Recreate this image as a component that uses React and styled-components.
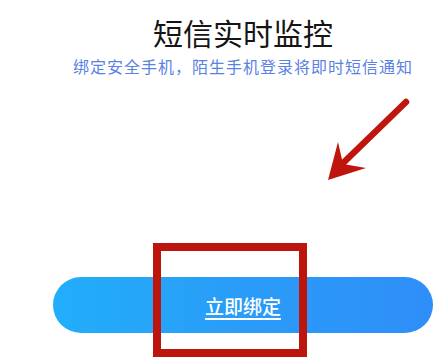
import styled, { createGlobalStyle } from 'styled-components';

const GlobalStyle = createGlobalStyle`
  html, body {
    margin: 0;
    padding: 0;
    background: #ffffff;
  }
  body {
    font-family: "Noto Sans CJK SC", "Noto Sans", sans-serif;
  }
`;

const Page = styled.div`
  position: relative;
  width: 442px;
  height: 359px;
  overflow: hidden;
  background: #ffffff;
  display: flex;
  flex-direction: column;
  align-items: center;
  padding: 16px 9px 0 53px;
  box-sizing: border-box;
`;

const Title = styled.h1`
  margin: 0;
  font-size: 30px;
  line-height: 32px;
  font-weight: 400;
  color: #151515;
`;

const Subtitle = styled.p`
  margin: 9px 0 0 0;
  font-size: 16px;
  line-height: 18px;
  letter-spacing: 1px;
  color: #5a82e4;
`;

const BindButton = styled.button`
  margin-top: 202px;
  width: 380px;
  height: 56px;
  border: none;
  border-radius: 28px;
  background: linear-gradient(90deg, #22aefa 0%, #2a9cf8 50%, #2f8ef8 100%);
  color: #ffffff;
  font-family: inherit;
  font-size: 19px;
  font-weight: 500;
  text-decoration: underline;
  text-underline-offset: 4px;
  text-decoration-thickness: 1.5px;
  cursor: pointer;
`;

const HighlightBox = styled.div`
  position: absolute;
  left: 153px;
  top: 243px;
  width: 154px;
  height: 114px;
  box-sizing: border-box;
  border: 8px solid #bb150d;
  pointer-events: none;
`;

const ArrowMark = styled.svg`
  position: absolute;
  left: 0;
  top: 0;
  pointer-events: none;
`;

export default function App() {
  return (
    <>
      <GlobalStyle />
      <Page>
        <Title>短信实时监控</Title>
        <Subtitle>绑定安全手机，陌生手机登录将即时短信通知</Subtitle>
        <BindButton>立即绑定</BindButton>
        <ArrowMark width="442" height="359" viewBox="0 0 442 359">
          <line x1="406" y1="102" x2="338" y2="168" stroke="#c0150d" strokeWidth="6.5" strokeLinecap="round" />
          <polygon points="328,180 338,142 343,164 366,168" fill="#c0150d" />
        </ArrowMark>
        <HighlightBox />
      </Page>
    </>
  );
}
